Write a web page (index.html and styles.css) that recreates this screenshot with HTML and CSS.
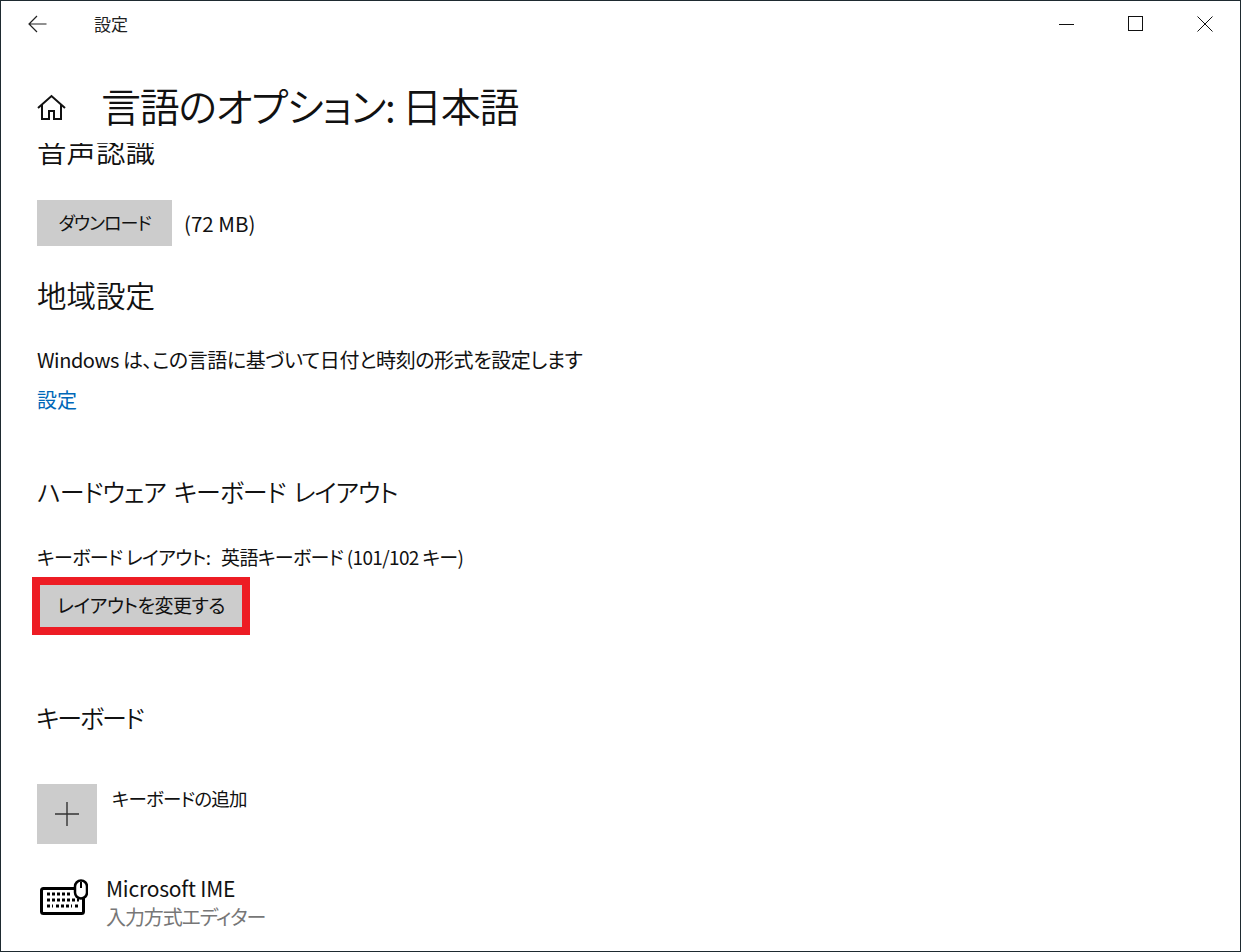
FILE: index.html
```html
<!DOCTYPE html>
<html lang="ja">
<head>
<meta charset="utf-8">
<title>設定</title>
<link rel="stylesheet" href="styles.css">
</head>
<body>
<div class="window">
  <header class="titlebar">
    <svg class="back" width="22" height="20" viewBox="0 0 22 20"><path d="M9 2 1 10l8 8M1 10h17.500" fill="none" stroke="#222" stroke-width="1.2"/></svg>
    <span class="app-name">設定</span>
    <div class="controls">
      <svg width="16" height="16" viewBox="0 0 16 16"><path d="M0 8.500h15" stroke="#111" stroke-width="1"/></svg>
      <svg width="16" height="16" viewBox="0 0 16 16"><rect x=".5" y=".5" width="14" height="14" fill="none" stroke="#111"/></svg>
      <svg width="16" height="16" viewBox="0 0 16 16"><path d="M.5.5l15 15M15.500.5l-15 15" stroke="#111" stroke-width="1" fill="none"/></svg>
    </div>
  </header>
  <div class="page-head">
    <svg class="home" width="29" height="28" viewBox="0 0 29 28"><path d="M1 14 14.500 2 28 14M5 11v14h7v-8h5v8h7V11" fill="none" stroke="#111" stroke-width="2"/></svg>
    <h1>言語のオプション: 日本語</h1>
  </div>
  <main class="scroller">
    <div class="content">
      <h2 class="first">音声認識</h2>
      <div class="download-row">
        <button class="btn download">ダウンロード</button>
        <span class="size">(72 MB)</span>
      </div>
      <h2 class="region">地域設定</h2>
      <p class="text region-text">Windows は、この言語に基づいて日付と時刻の形式を設定します</p>
      <a class="link">設定</a>
      <h2 class="hw">ハードウェア キーボード レイアウト</h2>
      <p class="text layout-text">キーボード レイアウト:&nbsp;&nbsp; 英語キーボード (101/102 キー)</p>
      <button class="btn highlighted">レイアウトを変更する</button>
      <h2 class="kb">キーボード</h2>
      <div class="add-row">
        <div class="plus"><svg width="26" height="26" viewBox="0 0 26 26"><path d="M13 1v24M1 13h24" stroke="#333" stroke-width="1.400"/></svg></div>
        <span class="add-label">キーボードの追加</span>
      </div>
      <div class="ime-row">
        <svg class="kbd" width="48" height="38" viewBox="0 0 48 38">
          <rect x="1.500" y="9.500" width="42" height="25" rx="2" fill="#fff" stroke="#000" stroke-width="3"/>
          <path d="M7 15h25M7 21h32M7 27h6M16 27h16M35 27h4" stroke="#000" stroke-width="3" stroke-dasharray="3 2" fill="none"/>
          <rect x="35" y="1.500" width="12" height="18" rx="6" fill="#fff" stroke="#000" stroke-width="2.500"/>
          <path d="M41 3v6" stroke="#000" stroke-width="2"/>
        </svg>
        <div class="ime-text">
          <div class="ime-name">Microsoft IME</div>
          <div class="ime-sub">入力方式エディター</div>
        </div>
      </div>
    </div>
  </main>
</div>
</body>
</html>
```
FILE: styles.css
```css
* { box-sizing: border-box; }
html, body { margin: 0; padding: 0; background: #fff; }
body {
  font-family: "Noto Sans CJK JP", "Noto Sans", sans-serif;
  font-feature-settings: "palt";
  color: #111;
  font-size: 18px;
}
.window {
  width: 1241px;
  height: 952px;
  border: 1px solid #1e2a30;
  display: flex;
  flex-direction: column;
  overflow: hidden;
}
.titlebar {
  height: 49px;
  flex: none;
  display: flex;
  align-items: center;
  padding-left: 27px;
  padding-bottom: 3px;
}
.back { flex: none; }
.app-name {
  margin-left: 44px;
  font-size: 17px;
  line-height: 20px;
  color: #222;
}
.controls {
  margin-left: auto;
  display: flex;
  gap: 53px;
  padding-right: 27px;
  align-items: center;
}
.page-head {
  height: 93px;
  flex: none;
  display: flex;
  align-items: center;
  padding-left: 36px;
  padding-top: 16px;
}
.home { flex: none; margin-top: 6px; }
h1 {
  margin: 0 0 0 35px;
  font-weight: 350;
  font-size: 40px;
  line-height: 54px;
  letter-spacing: -1.300px;
  white-space: nowrap;
}
.scroller {
  flex: 1;
  overflow: hidden;
  padding-left: 36px;
}
.content { margin-top: -13px; }
h2 {
  margin: 0;
  font-weight: 350;
  font-size: 29.500px;
  line-height: 38px;
}
.download-row {
  margin-top: 32px;
  display: flex;
  align-items: center;
  gap: 12px;
  font-size: 20px;
}
.size { font-size: 20.500px; }
.btn {
  display: block;
  border: 0;
  background: #ccc;
  font: inherit;
  font-size: 20px;
  color: #111;
  padding: 0;
}
.download {
  width: 135px;
  height: 46px;
  padding-bottom: 2px;
  font-size: 18px;
  letter-spacing: -1px;
}
.region { margin-top: 29px; }
.text { margin: 0; font-size: 20px; line-height: 26px; }
.region-text { margin-top: 34px; letter-spacing: -.45px; }
.link {
  display: block;
  margin-top: 14px;
  font-size: 20px;
  line-height: 26px;
  color: #0067b8;
}
.hw {
  margin-top: 59px;
  font-size: 25px;
  letter-spacing: -1px;
  word-spacing: 3.500px;
}
.layout-text { margin-top: 34px; font-size: 19px; letter-spacing: -.65px; }
.highlighted {
  margin-top: 7px;
  margin-left: -5px;
  width: 218px;
  height: 58px;
  border: 8px solid #ed1c24;
  padding-bottom: 3px;
  font-size: 19px;
  letter-spacing: -.5px;
}
.kb {
  margin-top: 63px;
  margin-left: -1px;
  font-size: 25px;
  letter-spacing: -2px;
}
.add-row {
  margin-top: 48px;
  display: flex;
  gap: 15px;
  font-size: 20px;
  line-height: 26px;
}
.plus {
  width: 60px;
  height: 60px;
  background: #ccc;
  display: flex;
  align-items: center;
  justify-content: center;
}
.add-label { margin-top: 1px; font-size: 18.500px; letter-spacing: -.8px; }
.ime-row {
  margin-top: 32px;
  display: flex;
  align-items: center;
  gap: 18px;
  margin-left: 3px;
}
.kbd { flex: none; margin-top: -10px; }
.ime-text { margin-top: -2px; }
.ime-name { font-size: 21px; line-height: 28px; letter-spacing: -.2px; }
.ime-sub { margin-top: 2px; font-size: 20px; line-height: 26px; color: #777; letter-spacing: -1.100px; }
```
